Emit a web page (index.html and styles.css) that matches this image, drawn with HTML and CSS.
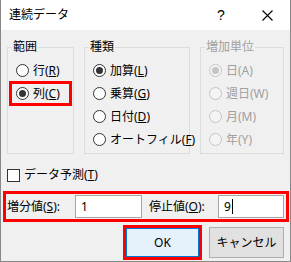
FILE: index.html
```html
<!DOCTYPE html>
<html lang="ja">
<head>
    <meta charset="UTF-8">
    <title>連続データ</title>
    <link rel="stylesheet" href="styles.css">
</head>
<body>
    <div class="dialog">
        <div class="titlebar">
            <span class="title">連続データ</span>
            <span class="title-btn help">?</span>
            <span class="title-btn close">
                <svg width="11" height="11" viewBox="0 0 11 11"><path d="M0.5 0.5 L10.5 10.5 M10.5 0.5 L0.5 10.5" stroke="#000" stroke-width="1.1" fill="none"/></svg>
            </span>
        </div>

        <div class="content">
            <div class="groups">
                <fieldset class="group g-range">
                    <legend>範囲</legend>
                    <div class="row"><span class="radio"></span><span>行(<u>R</u>)</span></div>
                    <div class="row mark-row"><span class="radio on"></span><span>列(<u>C</u>)</span></div>
                </fieldset>
                <fieldset class="group g-type">
                    <legend>種類</legend>
                    <div class="row"><span class="radio on"></span><span>加算(<u>L</u>)</span></div>
                    <div class="row"><span class="radio"></span><span>乗算(<u>G</u>)</span></div>
                    <div class="row"><span class="radio"></span><span>日付(<u>D</u>)</span></div>
                    <div class="row"><span class="radio"></span><span>オートフィル(<u>F</u>)</span></div>
                </fieldset>
                <fieldset class="group g-unit disabled">
                    <legend>増加単位</legend>
                    <div class="row"><span class="radio on"></span><span>日(A)</span></div>
                    <div class="row"><span class="radio"></span><span>週日(W)</span></div>
                    <div class="row"><span class="radio"></span><span>月(M)</span></div>
                    <div class="row"><span class="radio"></span><span>年(Y)</span></div>
                </fieldset>
            </div>

            <div class="check"><span class="box"></span><span>データ予測(<u>T</u>)</span></div>

            <div class="values">
                <span class="label l-step">増分値(<u>S</u>):</span>
                <div class="field f-step">1</div>
                <span class="label l-stop">停止値(<u>O</u>):</span>
                <div class="field f-stop">9<span class="caret"></span></div>
            </div>

            <div class="buttons">
                <div class="btn btn-ok">OK</div>
                <div class="btn">キャンセル</div>
            </div>
        </div>
    </div>
</body>
</html>
```

FILE: styles.css
```css
body {
    margin: 0;
    font-family: "Noto Sans", "Noto Sans CJK JP", sans-serif;
    font-size: 12px;
    color: #000;
}
.dialog {
    width: 291px;
    height: 262px;
    box-sizing: border-box;
    border: 1px solid #888;
    border-top: none;
    background: #f0f0f0;
    display: flex;
    flex-direction: column;
    overflow: hidden;
}
.titlebar {
    height: 30px;
    flex: none;
    background: #fff;
    display: flex;
    align-items: center;
}
.title {
    flex: 1;
    padding-left: 8px;
    line-height: 14px;
}
.title-btn {
    width: 46px;
    height: 30px;
    display: flex;
    align-items: center;
    justify-content: center;
}
.help {
    font-family: "Liberation Sans", sans-serif;
    font-size: 14px;
}
.content {
    padding: 10px 6px 0;
}
.groups {
    display: flex;
    gap: 10px;
}
.group {
    margin: 0;
    padding: 5px 0 2px;
    border: 1px solid #dcdcdc;
    min-width: 0;
    box-sizing: border-box;
}
.g-range { width: 67px; }
.g-type { width: 106px; }
.g-unit { width: 84px; }
legend {
    padding: 0 1px;
    margin-left: 4px;
    line-height: 14px;
}
.row {
    display: flex;
    align-items: center;
    gap: 4px;
    height: 23px;
    padding-left: 8px;
    white-space: nowrap;
    line-height: 14px;
}
.mark-row {
    margin: 0 2px;
    padding-left: 6px;
    outline: 3px solid #f00;
    outline-offset: -2px;
}
.radio {
    width: 13px;
    height: 13px;
    flex: none;
    box-sizing: border-box;
    border: 1px solid #333;
    border-radius: 50%;
    background: #fff;
    display: flex;
    align-items: center;
    justify-content: center;
}
.radio.on::after {
    content: "";
    width: 7px;
    height: 7px;
    border-radius: 50%;
    background: #333;
}
.disabled,
.disabled legend {
    color: #a0a0a0;
}
.disabled .radio {
    border-color: #c4c4c4;
    background: #f4f4f4;
}
.disabled .radio.on::after {
    background: #c4c4c4;
}
.check {
    display: flex;
    align-items: center;
    gap: 4px;
    height: 16px;
    margin-top: 13px;
    line-height: 14px;
}
.box {
    width: 13px;
    height: 13px;
    box-sizing: border-box;
    border: 1px solid #333;
    background: #fff;
}
.values {
    display: flex;
    align-items: center;
    margin: 8px -5px 0 -4px;
    padding: 1px 2px 1px 1px;
    border: 3px solid #f00;
    line-height: 14px;
}
.label {
    white-space: nowrap;
}
.l-step { width: 68px; }
.l-stop { width: 69px; margin-left: 7px; }
.field {
    height: 23px;
    box-sizing: border-box;
    border: 1px solid #a5a5a5;
    background: #fff;
    padding-left: 5px;
    display: flex;
    align-items: center;
}
.f-step { width: 67px; }
.f-stop { width: 66px; }
.caret {
    width: 1px;
    height: 15px;
    background: #000;
    margin-left: 1px;
}
.buttons {
    display: flex;
    justify-content: flex-end;
    gap: 9px;
    margin-top: 5px;
}
.btn {
    width: 75px;
    height: 31px;
    box-sizing: border-box;
    border: 1px solid #adadad;
    background: #e1e1e1;
    display: flex;
    align-items: center;
    justify-content: center;
    line-height: 14px;
}
.btn-ok {
    border: 2px solid #0078d7;
    background: #e5f1fb;
    outline: 3px solid #f00;
    outline-offset: -1px;
}
```
